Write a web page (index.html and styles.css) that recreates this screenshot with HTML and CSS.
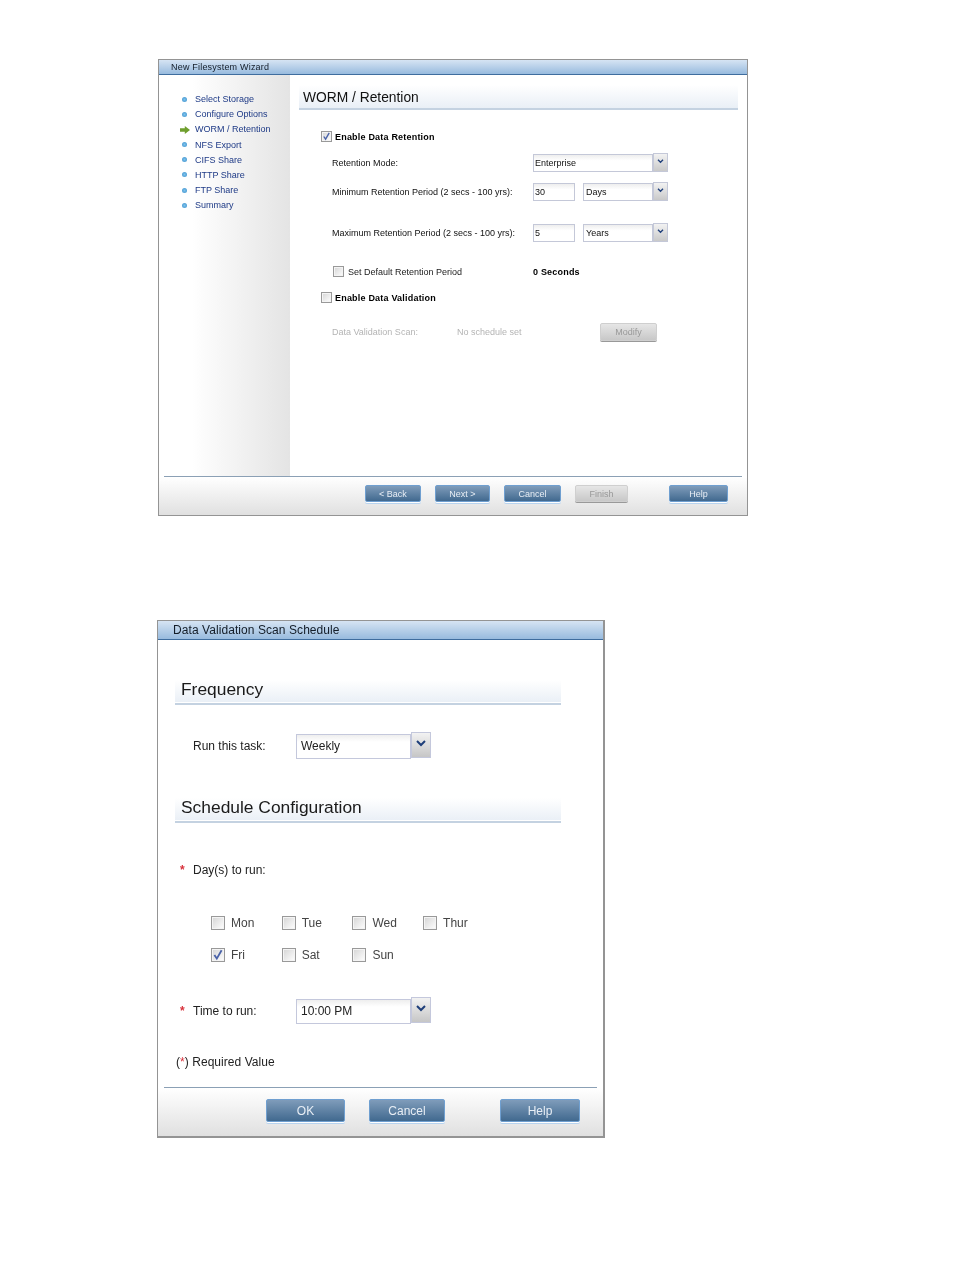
FILE: index.html
```html
<!DOCTYPE html>
<html lang="en">
<head>
<meta charset="utf-8">
<title>Wizard screens</title>
<link rel="stylesheet" href="styles.css">
</head>
<body>
<section class="win wiz">
  <div class="title">New Filesystem Wizard</div>
  <div class="wiz-body">
    <nav class="side">
      <div class="step"><i class="dot"></i>Select Storage</div>
      <div class="step"><i class="dot"></i>Configure Options</div>
      <div class="step"><svg class="go" viewBox="0 0 10 8"><path d="M0 2.2h4.8V0L10 4 4.8 8V5.8H0z" fill="#6f9e2e"/></svg>WORM / Retention</div>
      <div class="step"><i class="dot"></i>NFS Export</div>
      <div class="step"><i class="dot"></i>CIFS Share</div>
      <div class="step"><i class="dot"></i>HTTP Share</div>
      <div class="step"><i class="dot"></i>FTP Share</div>
      <div class="step"><i class="dot"></i>Summary</div>
    </nav>
    <div class="main">
      <h2 class="wiz-head">WORM / Retention</h2>
      <div class="wcheck wc1"><span class="cb"><svg viewBox="0 0 10 10"><path d="M2 5l2 3 4-7" fill="none" stroke="#4a62a8" stroke-width="1.5"/></svg></span><b>Enable Data Retention</b></div>
      <div class="frow fr1">
        <span class="flabel">Retention Mode:</span>
        <span class="sel w120">Enterprise</span><span class="arrow"><svg viewBox="0 0 8 6"><path d="M1 1l3 3 3-3" fill="none" stroke="#1f3f7a" stroke-width="1.6"/></svg></span>
      </div>
      <div class="frow fr2">
        <span class="flabel">Minimum Retention Period (2 secs - 100 yrs):</span>
        <span class="sel w42">30</span><span class="sel w70 gap">Days</span><span class="arrow"><svg viewBox="0 0 8 6"><path d="M1 1l3 3 3-3" fill="none" stroke="#1f3f7a" stroke-width="1.6"/></svg></span>
      </div>
      <div class="frow fr3">
        <span class="flabel">Maximum Retention Period (2 secs - 100 yrs):</span>
        <span class="sel w42">5</span><span class="sel w70 gap">Years</span><span class="arrow"><svg viewBox="0 0 8 6"><path d="M1 1l3 3 3-3" fill="none" stroke="#1f3f7a" stroke-width="1.6"/></svg></span>
      </div>
      <div class="wcheck wc2"><span class="cb"></span><span class="defl">Set Default Retention Period</span><b>0 Seconds</b></div>
      <div class="wcheck wc3"><span class="cb"></span><b>Enable Data Validation</b></div>
      <div class="frow fr4 dim">
        <span class="scan">Data Validation Scan:</span><span class="nosch">No schedule set</span>
        <span class="btn off modify">Modify</span>
      </div>
    </div>
  </div>
  <div class="foot wiz-foot">
    <span class="btn back">&lt; Back</span>
    <span class="btn next">Next &gt;</span>
    <span class="btn cancel">Cancel</span>
    <span class="btn off finish">Finish</span>
    <span class="btn help">Help</span>
  </div>
</section>

<section class="win sched">
  <div class="title">Data Validation Scan Schedule</div>
  <div class="sched-body">
    <h2 class="sec sec1">Frequency</h2>
    <div class="srow run"><span class="slabel">Run this task:</span><span class="ssel">Weekly</span><span class="sarrow"><svg viewBox="0 0 10 7"><path d="M1 1l4 4 4-4" fill="none" stroke="#1f3f7a" stroke-width="2"/></svg></span></div>
    <h2 class="sec sec2">Schedule Configuration</h2>
    <div class="srow days"><span class="star">*</span>Day(s) to run:</div>
    <div class="daygrid">
      <div class="day"><span class="cb big"></span>Mon</div>
      <div class="day"><span class="cb big"></span>Tue</div>
      <div class="day"><span class="cb big"></span>Wed</div>
      <div class="day"><span class="cb big"></span>Thur</div>
      <div class="day"><span class="cb big"><svg viewBox="0 0 10 10"><path d="M2 5l2 3 4-7" fill="none" stroke="#4a62a8" stroke-width="1.5"/></svg></span>Fri</div>
      <div class="day"><span class="cb big"></span>Sat</div>
      <div class="day"><span class="cb big"></span>Sun</div>
    </div>
    <div class="srow time"><span class="star">*</span><span class="tlabel">Time to run:</span><span class="ssel">10:00 PM</span><span class="sarrow"><svg viewBox="0 0 10 7"><path d="M1 1l4 4 4-4" fill="none" stroke="#1f3f7a" stroke-width="2"/></svg></span></div>
    <div class="req">(<span class="rstar">*</span>) Required Value</div>
  </div>
  <div class="foot sched-foot">
    <span class="btn big-btn ok">OK</span>
    <span class="btn big-btn scancel">Cancel</span>
    <span class="btn big-btn shelp">Help</span>
  </div>
</section>
</body>
</html>
```
FILE: styles.css
```css
* { box-sizing: border-box; }
html, body { margin: 0; padding: 0; background: #fff; }
body { width: 954px; height: 1270px; overflow: hidden; font-family: "Liberation Sans", Arial, sans-serif; color: #222; }
h2 { margin: 0; font-weight: 400; }

.win { border: 1px solid #949494; background: #fff; display: flex; flex-direction: column; filter: blur(.3px); }
.wiz { width: 590px; height: 457px; margin: 59px 0 0 158px; }
.sched { width: 448px; height: 518px; margin: 104px 0 0 157px; border-width: 1px 2px 2px 1px; }

.title { background: linear-gradient(#d6e4f3, #98bbde); border-bottom: 1px solid #3f6d9e; color: #141d28; }
.wiz .title { height: 15px; font-size: 9px; line-height: 14px; padding-left: 12px; letter-spacing: .2px; }
.sched .title { height: 19px; font-size: 12px; line-height: 19px; padding-left: 15px; letter-spacing: .07px; }

/* wizard */
.wiz-body { height: 402px; display: flex; }
.side { width: 131px; padding-top: 16.5px; background: linear-gradient(90deg, #fff 25%, #e4e4e4); }
.step { height: 15.2px; display: flex; align-items: center; padding-left: 36px; position: relative; font-size: 9px; color: #1e3a86; }
.dot { position: absolute; left: 23px; top: 5px; width: 5px; height: 5px; border-radius: 50%; background: radial-gradient(#7cc2ec, #3c8fcb); }
.go { position: absolute; left: 21px; top: 4px; width: 10px; height: 8px; }

.main { flex: 1; padding: 10px 9px 0 9px; font-size: 9px; color: #222; }
.wiz-head { height: 25px; padding-left: 4px; font-size: 13.8px; line-height: 26px; color: #111; background: linear-gradient(#fff, #e9eff6); border-bottom: 2px solid #c4d2e1; }

.cb { flex: none; display: inline-flex; width: 11px; height: 11px; border: 1px solid #999; background: linear-gradient(135deg, #d4d4d4, #fff); box-shadow: inset 0 0 0 1px #f4f4f4; }
.cb svg { width: 100%; height: 100%; }
.cb.big { width: 14px; height: 14px; }

.wcheck { display: flex; align-items: center; height: 11px; }
.wcheck b { color: #000; letter-spacing: .2px; }
.wc1 { margin: 21px 0 0 22px; gap: 3px; }
.wc2 { margin: 24px 0 0 34px; gap: 4px; }
.wc3 { margin: 15px 0 0 22px; gap: 3px; }
.defl { width: 181px; }

.frow { display: flex; align-items: center; margin-left: 33px; }
.flabel { width: 201px; flex: none; color: #111; }
.fr1 { height: 19px; margin-top: 11px; margin-bottom: 0; }
.fr2 { height: 19px; margin-top: 10px; }
.fr3 { height: 19px; margin-top: 22px; }
.sel { height: 18px; line-height: 16px; border: 1px solid #c4c8d8; padding-left: 1px; background: linear-gradient(#eee, #fff 35%); color: #111; font-size: 9px; }
.w120 { width: 120px; }
.w42 { width: 42px; }
.w70 { width: 70px; padding-left: 2px; }
.gap { margin-left: 8px; }
.arrow { width: 15px; height: 19px; display: flex; align-items: flex-start; justify-content: center; padding-top: 5px; border: 1px solid #c4c8d8; background: linear-gradient(#f2f2f2, #c9c9c9); }
.arrow svg { width: 7px; height: 5px; }

.dim { color: #b4b4b4; }
.fr4 { height: 20px; margin-top: 19px; }
.scan { width: 125px; }
.nosch { width: 143px; }

/* buttons */
.btn { display: inline-flex; align-items: center; justify-content: center; height: 17px; font-size: 9px; color: #e8eef5; border-radius: 2px; background: linear-gradient(#7f9cba, #41698f); border: 1px solid #6f9fd0; box-shadow: 0 1px 0 #fff, 0 2px 0 #b7d3ef; }
.btn.off { color: #999; background: linear-gradient(#e6e6e6, #c8c8c8); border-color: #cfcfcf; box-shadow: 0 1px 0 #999; }
.modify { width: 57px; height: 18px; }

.foot { flex: 1; display: flex; background: linear-gradient(#fff, #e0e0e0); position: relative; }
.foot::before { content: ""; position: absolute; top: -1px; left: 5px; right: 5px; height: 1px; background: #8ba0b5; }
.wiz-foot { padding: 8px 0 0 206px; align-items: flex-start; }
.back { width: 56px; }
.next { width: 55px; margin-left: 14px; }
.cancel { width: 57px; margin-left: 14px; }
.finish { width: 53px; margin-left: 14px; }
.help { width: 59px; margin-left: 41px; }

/* schedule */
.sched-body { height: 448px; font-size: 12px; color: #222; position: relative; padding-left: 17px; }
.sec { width: 386px; height: 25px; padding-left: 6px; font-size: 17.4px; line-height: 19px; color: #1a1a1a; background: linear-gradient(#fff, #e9eff6); border-bottom: 2px solid #c4d2e1; box-shadow: inset 0 -1px 0 #fff; }
.sec1 { margin-top: 40px; }
.sec2 { margin-top: 39px; }
.srow { display: flex; align-items: center; }
.run { height: 26px; margin: 28px 0 0 18px; }
.slabel { width: 103px; }
.ssel { width: 115px; height: 25px; line-height: 22px; padding-left: 4px; border: 1px solid #c4c8dc; background: linear-gradient(#eee, #fff 30%); }
.sarrow { width: 20px; height: 26px; margin-top: -2px; padding-top: 7px; display: flex; justify-content: center; align-items: flex-start; border: 1px solid #c4c8dc; background: linear-gradient(#f2f2f2, #c6c6c6); }
.sarrow svg { width: 10px; height: 7px; }
.days { height: 14px; margin: 40px 0 0 5px; }
.star { width: 13px; color: #d8323c; font-weight: 700; }
.daygrid { display: grid; grid-template-columns: repeat(4, 70.7px); grid-auto-rows: 31.5px; margin: 38px 0 0 36px; }
.day { display: flex; align-items: center; gap: 6px; height: 16px; color: #444; }
.time { height: 26px; margin: 20px 0 0 5px; }
.tlabel { width: 103px; }
.req { margin: 31px 0 0 1px; letter-spacing: .05px; }
.rstar { color: #d8323c; }
.big-btn { height: 23px; font-size: 12px; }
.sched-foot { padding: 11px 0 0 108px; align-items: flex-start; }
.sched-foot::before { left: 6px; right: 6px; }
.ok { width: 79px; }
.scancel { width: 76px; margin-left: 24px; }
.shelp { width: 80px; margin-left: 55px; }
```
